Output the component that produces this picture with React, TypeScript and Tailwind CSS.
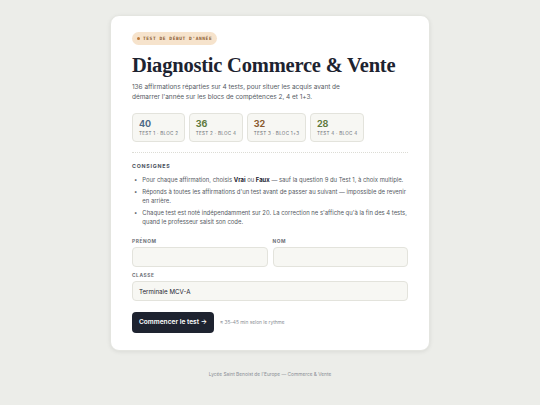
import React from "react";

const stats = [
  { n: "40", label: "Test 1 · Bloc 2", color: "text-[#4d6a87]" },
  { n: "36", label: "Test 2 · Bloc 4", color: "text-[#5f7a3c]" },
  { n: "32", label: "Test 3 · Bloc 1+3", color: "text-[#8a5a2e]" },
  { n: "28", label: "Test 4 · Bloc 4", color: "text-[#5f7a3c]" },
];

export default function App() {
  return (
    <div className="min-h-[405px] w-full bg-[#ecede9] flex flex-col items-center pt-[15px] font-['Inter',sans-serif] text-[#1f2430]">
      <div className="w-[320px] bg-white rounded-[9px] shadow-[0_1px_4px_rgba(0,0,0,0.08)] border border-[#e4e5e0] px-[21px] pt-[16px] pb-[17px]">
        <div className="flex w-fit items-center gap-[3px] rounded-full bg-[#f6e3cc] px-[5px] h-[13px] font-['DejaVu_Sans_Mono',monospace] text-[4.5px] leading-[13px] tracking-[0.13em] text-[#8a5a2e] font-bold">
          <span className="w-[3px] h-[3px] rounded-full bg-[#c07a3a]" />
          TEST DE DÉBUT D'ANNÉE
        </div>
        <h1 className="mt-[8px] font-['Liberation_Serif',serif] font-bold text-[20.5px] leading-[24px] tracking-[-0.01em] text-[#1d2330] whitespace-nowrap">
          Diagnostic Commerce &amp; Vente
        </h1>
        <p className="mt-[5px] w-[215px] text-[6.5px] leading-[10px] tracking-[-0.005em] text-[#555a63]">
          136 affirmations réparties sur 4 tests, pour situer les acquis avant de démarrer l'année sur les blocs de compétences 2, 4 et 1+3.
        </p>
        <div className="mt-[11px] flex gap-[3.5px]">
          {stats.map((s) => (
            <div key={s.n} className="rounded-[4px] border border-[#e3e3dc] bg-[#f7f7f3] px-[6px] pt-[4px] pb-[5px] h-[29px]">
              <div className={`text-[9px] leading-[12px] font-bold ${s.color}`}>{s.n}</div>
              <div className="text-[4.6px] leading-[7px] uppercase tracking-[0.06em] text-[#6b6f76] whitespace-nowrap">{s.label}</div>
            </div>
          ))}
        </div>
        <div className="mt-[10px] border-t border-dotted border-[#dcdcd5]" />
        <div className="mt-[10px] text-[5.3px] font-bold tracking-[0.14em] text-[#4b5260]">CONSIGNES</div>
        <ul className="mt-[5px] flex flex-col gap-[4px] text-[5.9px] leading-[8.4px] text-[#555a63]">
          <li className="flex gap-[5px] pl-[2px]">
            <span>•</span>
            <span>Pour chaque affirmation, choisis <b className="text-[#1d2330]">Vrai</b> ou <b className="text-[#1d2330]">Faux</b> — sauf la question 9 du Test 1, à choix multiple.</span>
          </li>
          <li className="flex gap-[5px] pl-[2px]">
            <span>•</span>
            <span>Réponds à toutes les affirmations d'un test avant de passer au suivant — impossible de revenir en arrière.</span>
          </li>
          <li className="flex gap-[5px] pl-[2px]">
            <span>•</span>
            <span>Chaque test est noté indépendamment sur 20. La correction ne s'affiche qu'à la fin des 4 tests, quand le professeur saisit son code.</span>
          </li>
        </ul>
        <div className="mt-[12px] grid grid-cols-2 gap-x-[5px]">
          <div>
            <div className="text-[4.8px] font-bold tracking-[0.12em] text-[#6b6f76]">PRÉNOM</div>
            <div className="mt-[2px] h-[20px] rounded-[4px] border border-[#e3e3dc] bg-[#f7f7f3]" />
          </div>
          <div>
            <div className="text-[4.8px] font-bold tracking-[0.12em] text-[#6b6f76]">NOM</div>
            <div className="mt-[2px] h-[20px] rounded-[4px] border border-[#e3e3dc] bg-[#f7f7f3]" />
          </div>
        </div>
        <div className="mt-[5px] text-[4.8px] font-bold tracking-[0.12em] text-[#6b6f76]">CLASSE</div>
        <div className="mt-[2px] h-[20px] rounded-[4px] border border-[#e3e3dc] bg-[#f7f7f3] flex items-center px-[6px] text-[6.2px] text-[#1d2330]">
          Terminale MCV-A
        </div>
        <div className="mt-[11px] flex items-center gap-[6px]">
          <div className="h-[21px] w-[82px] rounded-[4px] bg-[#1e2330] text-white text-[6.6px] font-semibold flex items-center justify-center">
            Commencer le test →
          </div>
          <span className="text-[4.8px] text-[#8a8e95]">≈ 35–45 min selon le rythme</span>
        </div>
      </div>
      <div className="mt-[20px] text-[4.8px] text-[#8a8e95]">Lycée Saint Benoist de l'Europe — Commerce &amp; Vente</div>
    </div>
  );
}
